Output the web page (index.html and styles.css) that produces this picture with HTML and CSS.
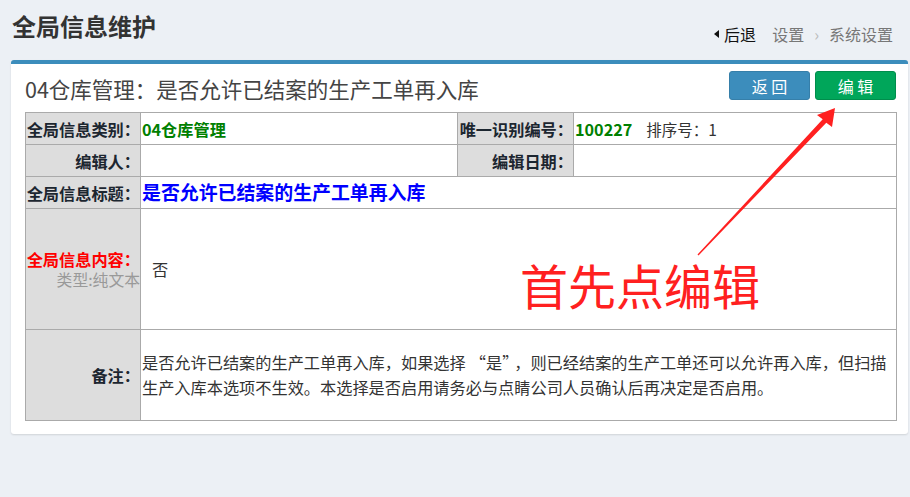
FILE: index.html
```html
<!DOCTYPE html>
<html lang="zh-CN">
<head>
  <meta charset="UTF-8">
  <title>全局信息维护</title>
  <link rel="stylesheet" href="styles.css">
</head>
<body>
  <section class="content-header">
    <h1>全局信息维护</h1>
    <ol class="breadcrumb">
      <li class="back"><span class="caret"></span>后退</li>
      <li>设置</li>
      <li class="sep">›</li>
      <li>系统设置</li>
    </ol>
  </section>

  <div class="box">
    <div class="box-header">
      <h3 class="box-title">04仓库管理：是否允许已结案的生产工单再入库</h3>
      <div class="tools">
        <button class="btn btn-primary">返 回</button>
        <button class="btn btn-success">编 辑</button>
      </div>
    </div>

    <table class="info">
      <colgroup>
        <col class="c1">
        <col class="c2">
        <col class="c3">
        <col class="c4">
      </colgroup>
      <tr class="row-s">
        <th>全局信息类别：</th>
        <td><span class="green">04仓库管理</span></td>
        <th>唯一识别编号：</th>
        <td><span class="green">100227</span><span class="sort">排序号：1</span></td>
      </tr>
      <tr class="row-s">
        <th>编辑人：</th>
        <td></td>
        <th>编辑日期：</th>
        <td></td>
      </tr>
      <tr class="row-s">
        <th>全局信息标题：</th>
        <td colspan="3"><span class="blue">是否允许已结案的生产工单再入库</span></td>
      </tr>
      <tr class="row-content">
        <th><span class="red">全局信息内容：</span><br><span class="type">类型:纯文本</span></th>
        <td colspan="3"><div class="content-text">否</div></td>
      </tr>
      <tr class="row-remark">
        <th>备注：</th>
        <td colspan="3" class="remark">是否允许已结案的生产工单再入库，如果选择<span class="lq">“</span>是<span class="rq">”</span>，则已经结案的生产工单还可以允许再入库，但扫描生产入库本选项不生效。本选择是否启用请务必与点睛公司人员确认后再决定是否启用。</td>
      </tr>
    </table>
  </div>

  <!-- annotation overlay -->
  <div class="note">首先点编辑</div>
  <svg class="arrow" width="910" height="497" viewBox="0 0 910 497">
    <polygon fill="#ff2020" points="697.5,254.5 822.7,119.3 817,115 835,108 832,127 826.3,122.7 698.5,255.5"/>
  </svg>
</body>
</html>
```

FILE: styles.css
```css
body {
  margin: 0;
  background: #ecf0f5;
  font-family: "Noto Sans CJK SC", "Liberation Sans", sans-serif;
  color: #333;
  position: relative;
  width: 910px;
  height: 497px;
  overflow: hidden;
}
.content-header {
  display: flex;
  justify-content: space-between;
  align-items: flex-end;
  padding: 10px 17px 0 12px;
  height: 50px;
  box-sizing: border-box;
}
.content-header h1 {
  margin: 0;
  font-size: 24px;
  font-weight: bold;
  line-height: 32px;
  align-self: flex-start;
}
.breadcrumb {
  list-style: none;
  margin: 0;
  padding: 0;
  display: flex;
  align-items: center;
  font-size: 16px;
  color: #777;
  line-height: 24px;
  margin-bottom: 4px;
}
.breadcrumb li {
  margin-left: 16px;
}
.breadcrumb .sep {
  color: #bbb;
  margin-left: 10px;
  margin-right: -6px;
}
.breadcrumb .back {
  color: #111;
  display: flex;
  align-items: center;
}
.caret {
  display: inline-block;
  width: 0;
  height: 0;
  border-top: 4px solid transparent;
  border-bottom: 4px solid transparent;
  border-right: 5px solid #111;
  margin-right: 5px;
}
.box {
  margin: 10px 2px 0 11px;
  background: #fff;
  border-top: 4px solid #3c8dbc;
  border-radius: 3px;
  box-shadow: 0 1px 2px rgba(0,0,0,0.12);
  padding: 7px 12px 13px 14px;
}
.box-header {
  display: flex;
  justify-content: space-between;
  align-items: center;
  height: 29px;
  margin-bottom: 12px;
}
.box-title {
  margin: 0;
  font-size: 21.5px;
  font-weight: normal;
  line-height: 29px;
  color: #444;
  padding-top: 6px;
}
.tools {
  display: flex;
  gap: 5px;
}
.btn {
  width: 81px;
  height: 29px;
  border: 1px solid transparent;
  border-radius: 3px;
  color: #fff;
  font-family: inherit;
  font-size: 16px;
  padding: 0;
  cursor: pointer;
}
.btn-primary {
  background: #3c8dbc;
  border-color: #367fa9;
}
.btn-success {
  background: #00a65a;
  border-color: #008d4c;
}
.info {
  width: 871px;
  border-collapse: collapse;
  table-layout: fixed;
  font-size: 16.2px;
}
.c1 { width: 115px; }
.c2 { width: 317px; }
.c3 { width: 116px; }
.c4 { width: 323px; }
.info th,
.info td {
  border: 1px solid #aaa;
  padding: 0 1px;
  line-height: 20px;
}
.info th {
  background: #dddddd;
  text-align: right;
  color: #1c2630;
  font-weight: bold;
  padding: 0;
  white-space: nowrap;
}
.row-s th,
.row-s td {
  height: 31px;
}
.row-content th,
.row-content td {
  height: 120px;
}
.row-remark th,
.row-remark td {
  height: 90px;
}
.green {
  color: #008000;
  font-weight: bold;
}
.sort {
  margin-left: 14px;
  font-size: 15.5px;
  color: #333;
}
.blue {
  color: #0000ff;
  font-weight: bold;
  font-size: 18.9px;
}
.red {
  color: #ff0000;
}
.type {
  color: #999;
  font-weight: normal;
  font-size: 15.8px;
}
.content-text {
  padding-left: 10px;
  color: #333;
}
.remark {
  line-height: 25px !important;
  color: #333;
  padding-right: 4px !important;
}
.lq {
  margin-left: 4px;
}
.rq {
  margin-right: 4px;
}
.note {
  position: absolute;
  left: 520px;
  top: 252px;
  font-size: 48px;
  line-height: 64px;
  color: #ff2020;
}
.arrow {
  position: absolute;
  left: 0;
  top: 0;
  pointer-events: none;
}
```
